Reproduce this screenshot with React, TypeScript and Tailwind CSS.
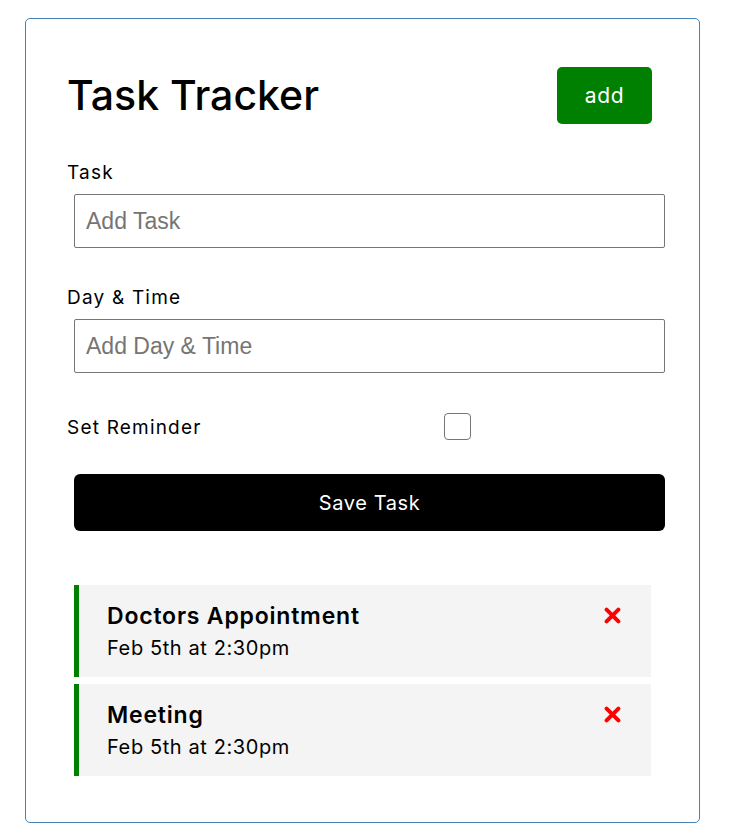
type Task = {
  id: number;
  text: string;
  day: string;
};

const tasks: Task[] = [
  { id: 1, text: "Doctors Appointment", day: "Feb 5th at 2:30pm" },
  { id: 2, text: "Meeting", day: "Feb 5th at 2:30pm" },
];

const font = "font-['Inter','Noto_Sans',sans-serif]";

function CloseIcon() {
  return (
    <svg width="17" height="17" viewBox="0 0 17 17" className="mt-[22px] shrink-0">
      <path d="M2.6 2.6 L14.4 14.4 M14.4 2.6 L2.6 14.4" stroke="#ff0000" strokeWidth="4" strokeLinecap="round" />
    </svg>
  );
}

function TaskRow({ task }: { task: Task }) {
  return (
    <div className="ml-[7px] w-[577px] h-[92px] bg-[#f4f4f4] border-l-[5px] border-[#008000] pl-[28px] pr-[30px] flex justify-between">
      <div className="pt-[17px]">
        <h3 className="text-[23px] leading-[28px] font-semibold tracking-[0.8px] text-black">{task.text}</h3>
        <p className="text-[20px] leading-[26px] mt-[5px] tracking-[0.6px] text-black">{task.day}</p>
      </div>
      <CloseIcon />
    </div>
  );
}

export default function App() {
  return (
    <div className={`${font} bg-white min-h-screen pt-[18px] pl-[25px]`}>
      <div className="w-[675px] border border-[#4682b4] rounded-[5px] pl-[41px] pr-[47px] pt-[48px] pb-[46px]">
        {/* Header */}
        <header className="h-[57px] flex items-center justify-between">
          <h1 className="text-[41px] font-medium text-black">Task Tracker</h1>
          <button className="w-[95px] h-[57px] rounded-[5px] bg-[#008000] text-white text-[21px] tracking-[0.6px]">
            add
          </button>
        </header>

        {/* Form */}
        <form>
          <label className="block mt-[37px] h-[24px] leading-[24px] text-[19px] tracking-[1.2px] text-black">Task</label>
          <input
            type="text"
            placeholder="Add Task"
            className="block mt-[9px] ml-[7px] w-[591px] h-[54px] border border-[#767676] rounded-[2px] px-[11px] text-[23px] font-['Liberation_Sans',Arial,sans-serif] placeholder:text-[#757575]"
          />

          <label className="block mt-[38px] h-[24px] leading-[24px] text-[19px] tracking-[1.2px] text-black">Day &amp; Time</label>
          <input
            type="text"
            placeholder="Add Day & Time"
            className="block mt-[9px] ml-[7px] w-[591px] h-[54px] border border-[#767676] rounded-[2px] px-[11px] text-[23px] font-['Liberation_Sans',Arial,sans-serif] placeholder:text-[#757575]"
          />

          <div className="mt-[40px] h-[27px] flex items-center">
            <label className="w-[196px] mt-[4px] text-[19px] tracking-[1.2px] text-black">Set Reminder</label>
            <div className="flex-1 flex justify-center">
              <span className="block w-[27px] h-[27px] border-[1.5px] border-[#767676] rounded-[4px] bg-white" />
            </div>
          </div>

          <button
            type="button"
            className="block mt-[34px] ml-[7px] w-[591px] h-[57px] rounded-[6px] bg-black text-white text-[20px] tracking-[0.6px]"
          >
            Save Task
          </button>
        </form>

        {/* Tasks */}
        <div className="mt-[54px] flex flex-col gap-[7px]">
          {tasks.map((t) => (
            <TaskRow key={t.id} task={t} />
          ))}
        </div>
      </div>
    </div>
  );
}
